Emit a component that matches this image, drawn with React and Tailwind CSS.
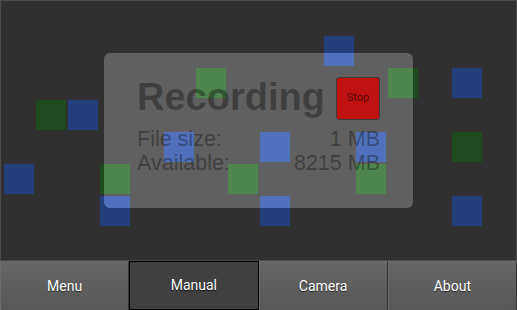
import React from 'react';

// squares on the camera preview canvas: x, y, kind, light variant (inside the panel)
const squares = [
  { x: 36, y: 100, c: 'g' },
  { x: 68, y: 100, c: 'b' },
  { x: 4, y: 164, c: 'b' },
  { x: 452, y: 68, c: 'b' },
  { x: 452, y: 132, c: 'g' },
  { x: 452, y: 196, c: 'b' },
  { x: 324, y: 36, c: 'b' },
  { x: 388, y: 68, c: 'g' },
  { x: 100, y: 164, c: 'g' },
  { x: 100, y: 196, c: 'b' },
  { x: 260, y: 196, c: 'b' },
  { x: 196, y: 68, c: 'g' },
  { x: 164, y: 132, c: 'b' },
  { x: 228, y: 164, c: 'g' },
  { x: 260, y: 132, c: 'b' },
  { x: 356, y: 132, c: 'b' },
  { x: 356, y: 164, c: 'g' },
];

const dark = { g: 'bg-[#1f4a1f]', b: 'bg-[#243d7b]' };
const light = { g: 'bg-[#4e844e]', b: 'bg-[#5170bb]' };

const tabs = ['Menu', 'Manual', 'Camera', 'About'];

export default function App() {
  return (
    <div className="w-[517px] h-[310px] flex flex-col bg-[#303030] font-['Roboto',sans-serif]">
      <div className="relative h-[261px] border border-[#4b4b4b] bg-[#303030] flex items-center justify-center">
        {squares.map((s, i) => (
          <div
            key={i}
            className={`absolute w-[30px] h-[30px] ${dark[s.c]}`}
            style={{ left: s.x - 1, top: s.y - 1 }}
          />
        ))}

        <div className="relative w-[309px] h-[155px] rounded-[6px] overflow-hidden bg-[#606060] pt-[24px] px-[33px] font-['Liberation_Sans',Arial,sans-serif] text-black/35">
          {squares.map((s, i) => (
            <div
              key={i}
              className={`absolute w-[30px] h-[30px] ${light[s.c]}`}
              style={{ left: s.x - 104, top: s.y - 53 }}
            />
          ))}

          <div className="relative flex items-start justify-between">
            <span className="text-[38px] font-bold leading-[40px]">Recording</span>
            <button className="w-[44px] h-[43px] rounded-[3px] border border-[#3a3a3a] bg-[#c01111] text-[11px] text-black/60 font-['Roboto',sans-serif] flex items-center justify-center">
              Stop
            </button>
          </div>

          <div className="relative mt-[7px] text-[21.5px] leading-[24px]">
            <div className="flex justify-between">
              <span>File size:</span>
              <span>1 MB</span>
            </div>
            <div className="flex justify-between">
              <span>Available:</span>
              <span>8215 MB</span>
            </div>
          </div>
        </div>
      </div>

      <div className="flex h-[49px]">
        {tabs.map((t) =>
          t === 'Manual' ? (
            <div
              key={t}
              className="flex-1 flex items-center justify-center bg-[#404040] border border-black text-[14px] text-white [text-shadow:0_1px_1px_rgba(0,0,0,0.8)]"
            >
              {t}
            </div>
          ) : (
            <div
              key={t}
              className="flex-1 flex items-center justify-center bg-gradient-to-b from-[#666666] to-[#575757] border-t border-l border-[#6c6c6c] border-r border-r-[#333333] text-[14px] text-white [text-shadow:0_1px_1px_rgba(0,0,0,0.6)]"
            >
              {t}
            </div>
          )
        )}
      </div>
    </div>
  );
}
